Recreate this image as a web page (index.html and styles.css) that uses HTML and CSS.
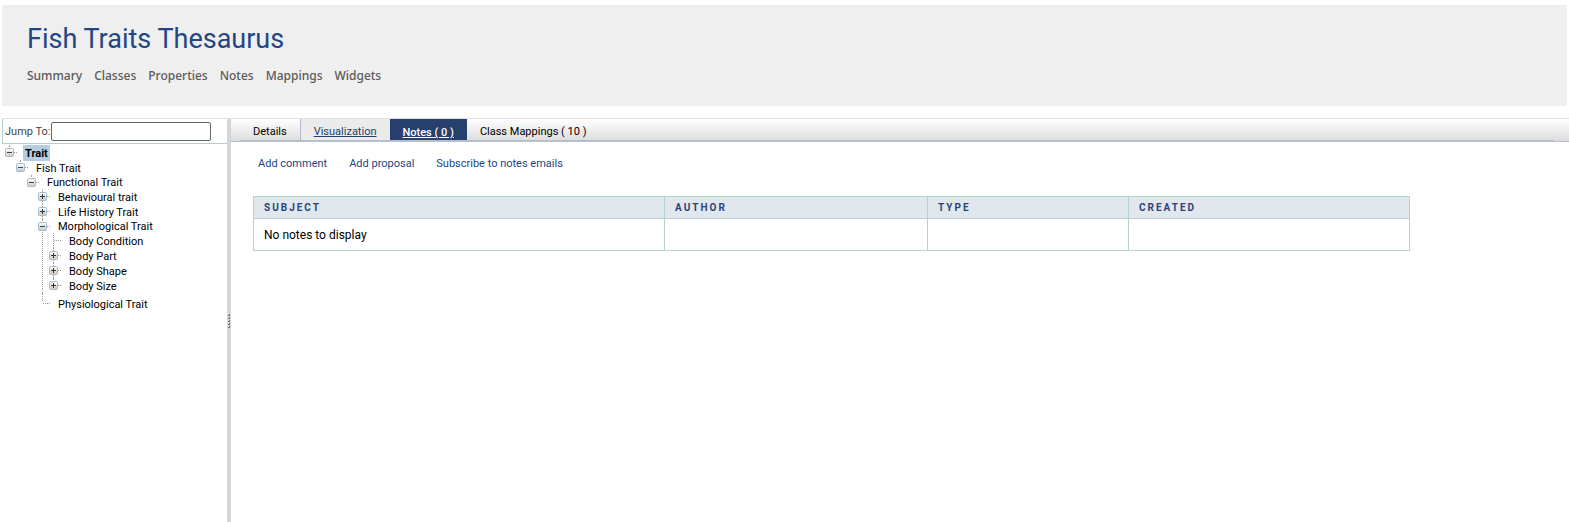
FILE: index.html
```html
<!DOCTYPE html>
<html lang="en">
<head>
<meta charset="utf-8">
<title>Fish Traits Thesaurus</title>
<link rel="stylesheet" href="styles.css">
</head>
<body>
<svg class="defs" aria-hidden="true">
  <defs>
    <linearGradient id="face" x1="0" y1="0" x2="0" y2="1">
      <stop offset="0" stop-color="#fdfdfc"/>
      <stop offset="1" stop-color="#c9c8c2"/>
    </linearGradient>
    <symbol id="minus" viewBox="0 0 9 9">
      <rect x=".5" y=".5" width="8" height="8" rx="1" fill="url(#face)" stroke="#a3bcd6"/>
      <path d="M2 4.5h5" stroke="#444"/>
    </symbol>
    <symbol id="plus" viewBox="0 0 9 9">
      <rect x=".5" y=".5" width="8" height="8" rx="1" fill="url(#face)" stroke="#a3bcd6"/>
      <path d="M2 4.5h5M4.5 2v5" stroke="#333"/>
    </symbol>
  </defs>
</svg>
<header class="header">
  <h1 class="title">Fish Traits Thesaurus</h1>
  <nav class="nav">
    <a href="#">Summary</a>
    <a href="#">Classes</a>
    <a href="#">Properties</a>
    <a href="#">Notes</a>
    <a href="#">Mappings</a>
    <a href="#">Widgets</a>
  </nav>
</header>
<div class="panes">
  <aside class="sidebar">
    <form class="jump">
      <label for="jump">Jump To:</label>
      <input id="jump" class="jump-input" type="text">
    </form>
    <ul class="tree">
      <li><div class="row"><button class="toggle" aria-label="Collapse Trait"><svg><use href="#minus"/></svg></button><a href="#" class="node selected">Trait</a></div>
        <ul>
          <li><div class="row"><button class="toggle" aria-label="Collapse Fish Trait"><svg><use href="#minus"/></svg></button><a href="#" class="node">Fish Trait</a></div>
            <ul>
              <li><div class="row tight"><button class="toggle" aria-label="Collapse Functional Trait"><svg><use href="#minus"/></svg></button><a href="#" class="node">Functional Trait</a></div>
                <ul>
                  <li><div class="row"><button class="toggle" aria-label="Expand Behavioural trait"><svg><use href="#plus"/></svg></button><a href="#" class="node">Behavioural trait</a></div></li>
                  <li><div class="row"><button class="toggle" aria-label="Expand Life History Trait"><svg><use href="#plus"/></svg></button><a href="#" class="node">Life History Trait</a></div></li>
                  <li><div class="row tight"><button class="toggle" aria-label="Collapse Morphological Trait"><svg><use href="#minus"/></svg></button><a href="#" class="node">Morphological Trait</a></div>
                    <ul>
                      <li><div class="row leaf"><a href="#" class="node">Body Condition</a></div></li>
                      <li><div class="row"><button class="toggle" aria-label="Expand Body Part"><svg><use href="#plus"/></svg></button><a href="#" class="node">Body Part</a></div></li>
                      <li><div class="row"><button class="toggle" aria-label="Expand Body Shape"><svg><use href="#plus"/></svg></button><a href="#" class="node">Body Shape</a></div></li>
                      <li><div class="row"><button class="toggle" aria-label="Expand Body Size"><svg><use href="#plus"/></svg></button><a href="#" class="node">Body Size</a></div></li>
                    </ul>
                  </li>
                  <li class="last"><div class="row leaf"><a href="#" class="node">Physiological Trait</a></div></li>
                </ul>
              </li>
            </ul>
          </li>
        </ul>
      </li>
    </ul>
  </aside>
  <div class="splitter">
    <svg class="grip" viewBox="0 0 4 14"><path d="M2.5 0v2M2.5 3v2M2.5 6v2M2.5 9v2M2.5 12v2" stroke="#777"/><path d="M1 1.5h2M1 4.5h2M1 7.5h2M1 10.5h2M1 13.5h2" stroke="#777"/></svg>
  </div>
  <main class="main">
    <div class="tabbar">
      <nav class="tabs">
        <a href="#" class="tab">Details</a>
        <a href="#" class="tab hover">Visualization</a>
        <a href="#" class="tab active">Notes ( 0 )</a>
        <a href="#" class="tab">Class Mappings ( 10 )</a>
      </nav>
    </div>
    <div class="content">
      <div class="actions">
        <a href="#">Add comment</a>
        <a href="#">Add proposal</a>
        <a href="#">Subscribe to notes emails</a>
      </div>
      <table class="notes">
        <thead>
          <tr><th class="c-subject">Subject</th><th class="c-author">Author</th><th class="c-type">Type</th><th>Created</th></tr>
        </thead>
        <tbody>
          <tr><td>No notes to display</td><td></td><td></td><td></td></tr>
        </tbody>
      </table>
    </div>
  </main>
</div>
</body>
</html>
```
FILE: styles.css
```css
* { box-sizing: border-box; }
body {
  margin: 0;
  min-height: 100vh;
  display: flex;
  flex-direction: column;
  background: #fff;
  color: #000;
  font: 11px/15px Roboto, sans-serif;
}
a { color: inherit; text-decoration: none; }
.defs { position: absolute; width: 0; height: 0; }

.header {
  margin: 5px 2px 12px;
  padding: 16px 25px 21px;
  background: #efefef;
}
.title {
  margin: 0 0 9px;
  font-size: 27px;
  line-height: 36px;
  font-weight: 400;
  color: #234585;
}
.nav {
  display: flex;
  gap: 12px;
  font: 500 12px/19px "Noto Sans", sans-serif;
  color: #5a5a5a;
}

.panes {
  flex: 1;
  display: flex;
  margin-left: 2px;
  border-top: 1px solid #e0e2e2;
}
.sidebar { width: 225px; }
.jump {
  display: flex;
  align-items: center;
  gap: 1px;
  height: 25px;
  padding-left: 2px;
  border-left: 1px solid #b5d0c8;
  border-bottom: 1px solid #b5d0c8;
  color: #444;
}
.jump-input {
  width: 160px;
  height: 19px;
  border: 1px solid #666;
  border-radius: 2px;
  background: #fff;
}

.tree, .tree ul { margin: 0; padding: 0; list-style: none; }
.tree { padding: 1px 0 0 3px; }
.tree ul { padding-left: 11px; }
.tree li { position: relative; }
.tree li::before {
  content: "";
  position: absolute;
  left: 4px;
  top: 0;
  bottom: 0;
  border-left: 1px dotted #999;
}
.tree > li::before,
.tree li:last-child::before { bottom: auto; height: 8px; }
.row { position: relative; display: flex; align-items: center; height: 15px; }
.row::before {
  content: "";
  position: absolute;
  left: 5px;
  top: 7px;
  width: 7px;
  border-top: 1px dotted #999;
}
.row.tight { height: 14px; }
.row.leaf { padding-left: 9px; }
.last { padding-top: 3px; }
.tree .last::before { height: 11px; }
.toggle {
  position: relative;
  width: 9px;
  height: 9px;
  padding: 0;
  border: 0;
  background: none;
}
.toggle svg { display: block; width: 9px; height: 9px; }
.node { margin-left: 9px; padding: 2px 2px 0; line-height: 14px; }
.selected { background: #b5cde1; font-weight: 700; }

.splitter {
  display: flex;
  align-items: center;
  width: 4px;
  background: #d3d7da;
}
.grip { width: 4px; height: 14px; }

.main { flex: 1; }
.tabbar {
  height: 23px;
  padding: 0 15px 0 9px;
  border-bottom: 1px solid #b7bfcc;
  background: linear-gradient(#fff, #dcdcdc);
}
.tabs {
  display: flex;
  height: 22px;
  border-bottom: 1px solid #b7bfcc;
}
.tab { padding: 0 13px; line-height: 26px; }
.tab.hover {
  border-left: 1px solid #b3bac8;
  background: #ebebeb;
  color: #263f6a;
  text-decoration: underline;
}
.tab.active {
  background: #263f6d;
  color: #fff;
  font-weight: 500;
  line-height: 28px;
  text-decoration: underline;
}
.content { padding: 14px 22px; }
.actions {
  display: flex;
  gap: 22px;
  padding-left: 5px;
  margin-bottom: 25px;
  color: #234585;
}
.notes {
  width: 1157px;
  max-width: 100%;
  table-layout: fixed;
  border-collapse: collapse;
}
.notes th, .notes td {
  padding: 0 10px;
  border: 1px solid #b5d3c9;
  text-align: left;
}
.notes th {
  height: 22px;
  background: #e0e7ed;
  color: #2d4377;
  font: 700 10px/15px Roboto, sans-serif;
  letter-spacing: 2px;
  text-transform: uppercase;
}
.notes td { height: 32px; padding-top: 1px; font-size: 12px; }
.c-subject { width: 411px; }
.c-author { width: 263px; }
.c-type { width: 201px; }
```
